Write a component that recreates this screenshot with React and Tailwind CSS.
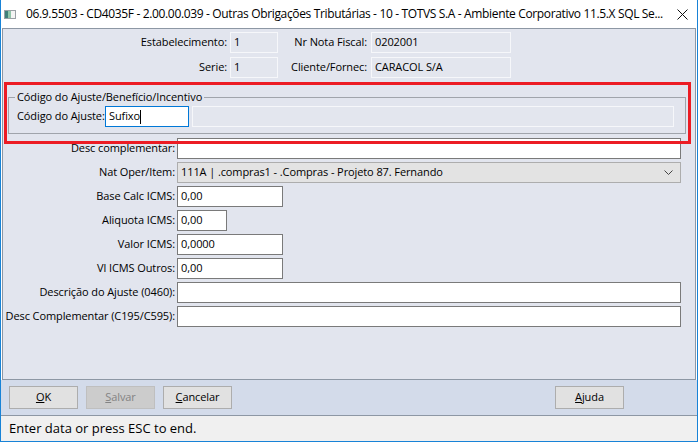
import React from 'react'

function RoField({ value, className }) {
  return (
    <div className={'h-[21px] border border-[#f6f7fa] bg-[#e3e6ee] pl-[3px] flex items-center ' + className}>
      {value}
    </div>
  )
}

function TextField({ value, className }) {
  return (
    <div className={'h-[21px] border border-[#7a7a7a] bg-white pl-[3px] flex items-center ' + className}>
      {value}
    </div>
  )
}

function Row({ label, children }) {
  return (
    <div className="flex items-center h-[21px]">
      <div className="w-[172px] text-right whitespace-nowrap">{label}</div>
      <div className="ml-[2px]">{children}</div>
    </div>
  )
}

function Btn({ children, disabled }) {
  return (
    <button
      className={
        disabled
          ? 'h-[23px] w-[69px] border border-[#bfbfbf] bg-[#cccccc] text-[#838383]'
          : 'h-[23px] w-[69px] border border-[#adadad] bg-[#e1e1e1] text-black'
      }
    >
      {children}
    </button>
  )
}

export default function App() {
  return (
    <div className="w-[698px] h-[442px] flex flex-col bg-white border-x border-b border-[#1883d7] font-['Open_Sans',sans-serif] text-[11px] tracking-[-0.1px] text-black overflow-hidden">
      {/* Title bar */}
      <div className="h-[28px] flex items-center shrink-0">
        <svg width="12" height="9" viewBox="0 0 12 9" className="ml-[3px] mt-[1px] shrink-0">
          <rect x="0.5" y="0.5" width="11" height="8" fill="#f4f4f4" stroke="#9aa0a6" />
          <rect x="1" y="1" width="3" height="7" fill="#3f7f78" />
          <rect x="4" y="1" width="3" height="7" fill="#8fc4a8" />
        </svg>
        <div className="ml-[10px] whitespace-nowrap text-[12px] tracking-[-0.35px]">
          06.9.5503 - CD4035F - 2.00.00.039 - Outras Obrigações Tributárias - 10 - TOTVS S.A - Ambiente Corporativo 11.5.X SQL Se...
        </div>
        <svg width="11" height="11" viewBox="0 0 11 11" className="ml-auto mr-[9px] shrink-0">
          <path d="M0.5 0.5 L10.5 10.5 M10.5 0.5 L0.5 10.5" stroke="#111" strokeWidth="1" />
        </svg>
      </div>

      {/* Main panel */}
      <div className="relative mx-[1px] h-[352px] shrink-0 border border-[#8d97a4] bg-[#e2e5ee] pt-[3px]">
        <div className="flex flex-col gap-[4px]">
          <div className="flex items-center h-[21px]">
            <div className="w-[224px] text-right">Estabelecimento:</div>
            <RoField value="1" className="ml-[3px] w-[48px]" />
            <div className="w-[88px] text-right ml-[1px]">Nr Nota Fiscal:</div>
            <RoField value="0202001" className="ml-[4px] w-[140px]" />
          </div>
          <div className="flex items-center h-[21px]">
            <div className="w-[224px] text-right">Serie:</div>
            <RoField value="1" className="ml-[3px] w-[48px]" />
            <div className="w-[88px] text-right ml-[1px]">Cliente/Fornec:</div>
            <RoField value="CARACOL S/A" className="ml-[4px] w-[140px]" />
          </div>
        </div>

        <fieldset className="mt-[11px] ml-[5px] w-[678px] border border-[#a0a4ab] pt-[1px] pb-[6px]">
          <legend className="ml-[6px] px-[2px] leading-[16px]">Código do Ajuste/Benefício/Incentivo</legend>
          <div className="flex items-center h-[21px] pl-[8px]">
            <div className="w-[84px] whitespace-nowrap">Código do Ajuste:</div>
            <div className="ml-[4px] h-[21px] w-[84px] border border-[#0078d7] bg-white pl-[3px] flex items-center">
              Sufixo<span className="inline-block w-[1px] h-[14px] bg-black" />
            </div>
            <RoField value="" className="ml-[3px] w-[482px]" />
          </div>
        </fieldset>

        <div className="mt-[4px] flex flex-col gap-[3px]">
          <Row label="Desc complementar:">
            <TextField value="" className="w-[504px]" />
          </Row>
          <Row label="Nat Oper/Item:">
            <div className="h-[21px] w-[504px] border border-[#adadad] bg-[#e3e3e3] pl-[3px] pr-[7px] flex items-center justify-between">
              <span>111A | .compras1 - .Compras - Projeto 87. Fernando</span>
              <svg width="9" height="5" viewBox="0 0 9 5">
                <path d="M0.5 0.5 L4.5 4.5 L8.5 0.5" fill="none" stroke="#444" strokeWidth="1" />
              </svg>
            </div>
          </Row>
          <Row label="Base Calc ICMS:">
            <TextField value="0,00" className="w-[106px]" />
          </Row>
          <Row label="Aliquota ICMS:">
            <TextField value="0,00" className="w-[50px]" />
          </Row>
          <Row label="Valor ICMS:">
            <TextField value="0,0000" className="w-[106px]" />
          </Row>
          <Row label="Vl ICMS Outros:">
            <TextField value="0,00" className="w-[106px]" />
          </Row>
          <Row label="Descrição do Ajuste (0460):">
            <TextField value="" className="w-[504px]" />
          </Row>
          <Row label="Desc Complementar (C195/C595):">
            <TextField value="" className="w-[504px]" />
          </Row>
        </div>

        {/* red highlight annotation */}
        <div className="absolute left-[1px] top-[53px] w-[687px] h-[62px] border-[3px] border-[#ec1c24] pointer-events-none" />
      </div>

      {/* Button bar */}
      <div className="h-[36px] shrink-0 bg-[#d3dbea] border-b border-[#8d97a4] flex items-center justify-between pl-[8px] pr-[73px]">
        <div className="flex gap-[8px]">
          <Btn><span className="underline">O</span>K</Btn>
          <Btn disabled><span className="underline">S</span>alvar</Btn>
          <Btn><span className="underline">C</span>ancelar</Btn>
        </div>
        <Btn><span className="underline">A</span>juda</Btn>
      </div>

      {/* Status bar */}
      <div className="flex-1 bg-[#f0f0f0] flex items-center pl-[8px] text-[13px] tracking-normal">
        Enter data or press ESC to end.
      </div>
    </div>
  )
}
